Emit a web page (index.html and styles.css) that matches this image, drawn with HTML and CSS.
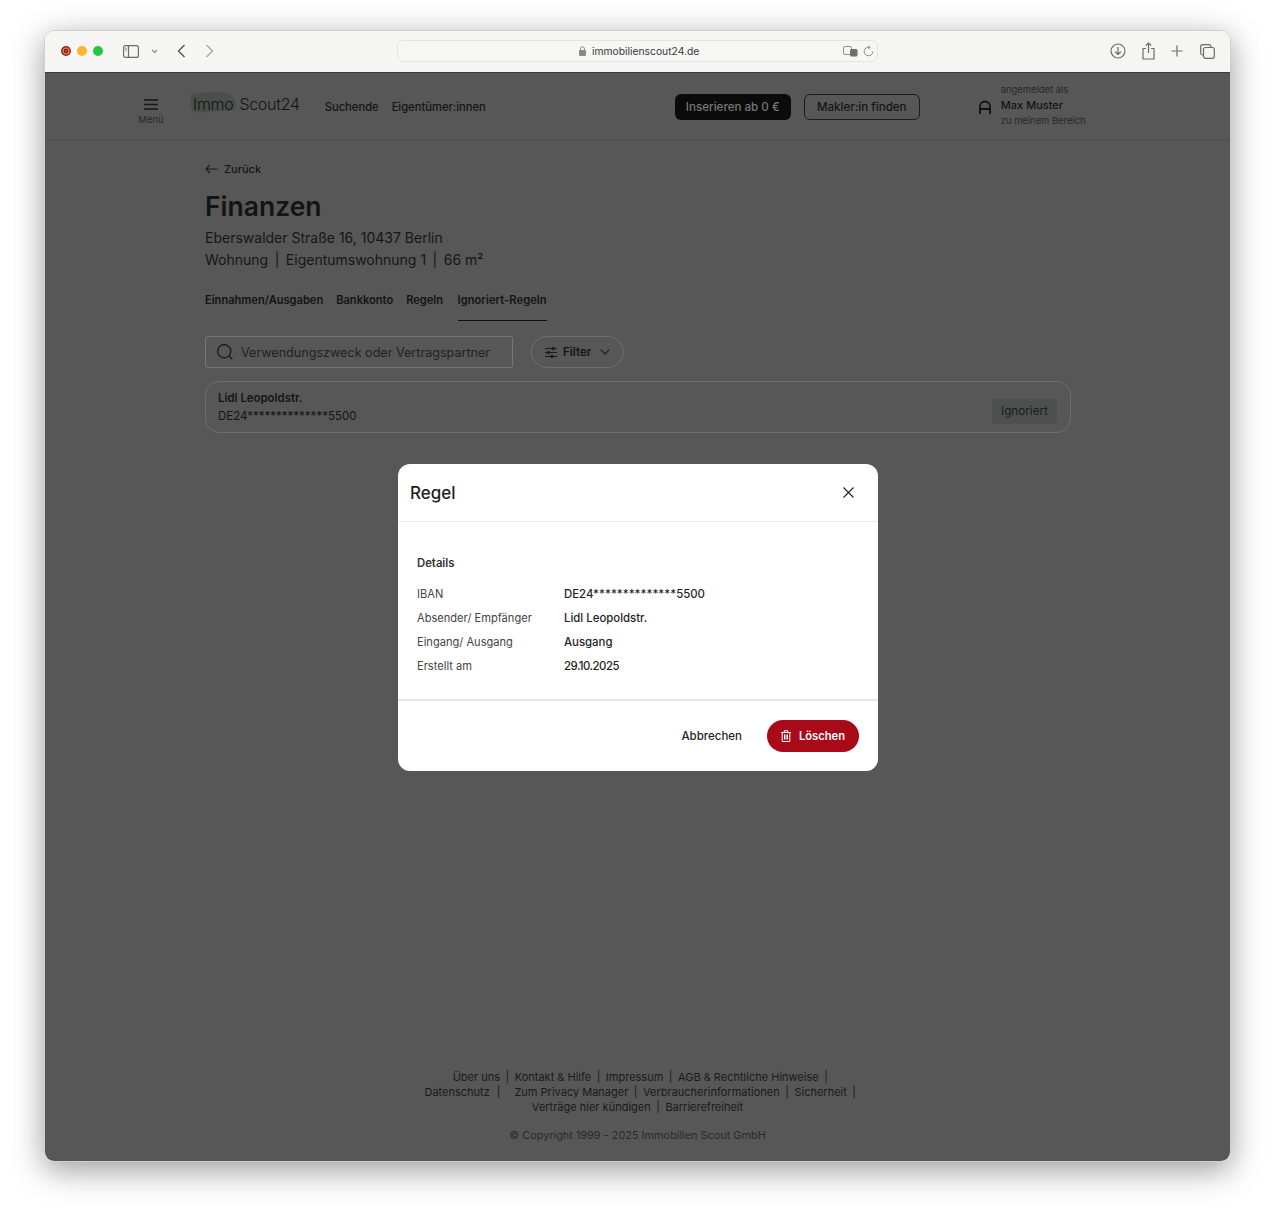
FILE: index.html
```html
<!DOCTYPE html>
<html lang="de">
<head>
  <meta charset="UTF-8" />
  <title>Finanzen - ImmoScout24</title>
  <link rel="stylesheet" href="styles.css">
</head>
<body>
  <div class="window">

    <div class="toolbar">
      <div class="toolbar-left">
        <span class="light light-red">
          <svg width="10" height="10" viewBox="0 0 10 10"><circle cx="5" cy="5" r="5" fill="#8e2230"/><circle cx="5" cy="5" r="3" fill="none" stroke="#e8902a" stroke-width="1.2"/><circle cx="5" cy="5" r="1" fill="#c9402a"/></svg>
        </span>
        <span class="light light-yellow"></span>
        <span class="light light-green"></span>
        <svg class="tb-sidebar" width="16" height="13" viewBox="0 0 16 13" fill="none" stroke="#6f6a6a" stroke-width="1.2"><rect x="0.6" y="0.6" width="14.8" height="11.8" rx="2"/><path d="M5.5 .6v11.8"/><path d="M2.2 3.2h1.6M2.2 5.2h1.6" stroke-width="1"/></svg>
        <svg class="tb-chevron" width="7" height="5" viewBox="0 0 7 5" fill="none" stroke="#8a8a8a" stroke-width="1.2"><path d="M1 1l2.5 2.5L6 1"/></svg>
        <svg class="tb-back" width="9" height="14" viewBox="0 0 9 14" fill="none" stroke="#555" stroke-width="1.4"><path d="M7.5 1L1.5 7l6 6"/></svg>
        <svg class="tb-forward" width="9" height="14" viewBox="0 0 9 14" fill="none" stroke="#a8a8a8" stroke-width="1.4"><path d="M1.5 1l6 6-6 6"/></svg>
      </div>
      <div class="urlbar">
        <svg class="url-lock" width="7" height="10" viewBox="0 0 7 10"><path d="M1.5 4V2.8a2 2 0 0 1 4 0V4" fill="none" stroke="#8a8a8a"/><rect x="0" y="4" width="7" height="6" rx="1" fill="#8a8a8a"/></svg>
        <span class="url-text">immobilienscout24.de</span>
        <svg class="url-translate" width="15" height="11" viewBox="0 0 15 11"><rect x="0.5" y="0.5" width="8" height="8" rx="1.5" fill="none" stroke="#8f8f8f"/><rect x="7" y="3" width="7.5" height="7.5" rx="1.5" fill="#6e6e6e"/></svg>
        <svg class="url-reload" width="11" height="12" viewBox="0 0 11 12" fill="none" stroke="#8a8a8a"><path d="M6.8 2.4A4.3 4.3 0 1 0 9.8 6.5"/><path d="M5.4 .6l1.7 1.8-1.9 1.5"/></svg>
      </div>
      <div class="toolbar-right">
        <svg width="16" height="16" viewBox="0 0 16 16" fill="none" stroke="#6f6a6a" stroke-width="1.2"><circle cx="8" cy="8" r="7"/><path d="M8 4v7.5M5.2 8.8L8 11.5l2.8-2.7"/></svg>
        <svg width="13" height="18" viewBox="0 0 13 18" fill="none" stroke="#6f6a6a" stroke-width="1.2"><path d="M4 6.5H1v10.5h11V6.500H9"/><path d="M6.500 11V1M3.800 3.500L6.500 1l2.700 2.500"/></svg>
        <svg width="12" height="12" viewBox="0 0 12 12" fill="none" stroke="#6f6a6a" stroke-width="1.2"><path d="M6 .5v11M.5 6h11"/></svg>
        <svg class="tb-tabs" width="15" height="15" viewBox="0 0 15 15" fill="none" stroke="#6f6a6a" stroke-width="1.2"><rect x="3.500" y="3.500" width="10.800" height="10.800" rx="2"/><path d="M3 11H2.500a2 2 0 0 1-1.800-2V2.700A2 2 0 0 1 2.700 .7H9a2 2 0 0 1 2 1.800V3"/></svg>
      </div>
    </div>

    <div class="page">
      <header class="site-header">
        <div class="menu-btn">
          <svg width="14" height="11" viewBox="0 0 14 11" stroke="#161616" stroke-width="1.600"><path d="M0 1h14M0 5.500h14M0 10h14"/></svg>
          <span>Menü</span>
        </div>
        <div class="logo">
          <svg class="logo-blob" width="46" height="21" viewBox="0 0 47 24" preserveAspectRatio="none"><path d="M3 2C12 .5 30-.500 38 1c5 1 8 6 8.500 14 .3 5-2 7-6 6.500C30 20.500 18 24 6 23 1 22.500 0 17 .5 10 .7 6 1 2.500 3 2z" fill="#4a4f4c"/></svg>
          <span class="logo-text">Immo</span>
          <span class="logo-text">Scout24</span>
        </div>
        <nav class="site-nav">
          <a>Suchende</a>
          <a>Eigentümer:innen</a>
        </nav>
        <a class="btn-dark">Inserieren ab 0 €</a>
        <a class="btn-outline">Makler:in finden</a>
        <div class="user">
          <svg width="12" height="14" viewBox="0 0 12 14" fill="none" stroke="#111" stroke-width="1.800"><path d="M1 14V6.500a5 5 0 0 1 10 0V14M1 9h10"/></svg>
          <div class="user-text">
            <small>angemeldet als</small>
            <strong>Max Muster</strong>
            <small>zu meinem Bereich</small>
          </div>
        </div>
      </header>

      <main class="content">
        <a class="back-link">
          <svg width="13" height="10" viewBox="0 0 13 10" fill="none" stroke="#1c1c1c" stroke-width="1.100"><path d="M12.500 5H1M5 1L1 5l4 4"/></svg>
          Zurück
        </a>
        <h1>Finanzen</h1>
        <p class="address">Eberswalder Straße 16, 10437 Berlin</p>
        <p class="address">Wohnung<span class="sep">|</span>Eigentumswohnung 1<span class="sep">|</span>66 m²</p>

        <div class="tabs">
          <a class="tab">Einnahmen/Ausgaben</a>
          <a class="tab">Bankkonto</a>
          <a class="tab">Regeln</a>
          <a class="tab tab-active">Ignoriert-Regeln</a>
        </div>

        <div class="filters">
          <div class="search">
            <svg width="16" height="16" viewBox="0 0 17 17" fill="none" stroke="#161616" stroke-width="1.300"><circle cx="7.700" cy="7.700" r="7"/><path d="M12.800 12.800l3.500 3.500"/></svg>
            <span>Verwendungszweck oder Vertragspartner</span>
          </div>
          <div class="filter-btn">
            <svg width="12" height="11" viewBox="0 0 12 11" fill="none" stroke="#1c1c1c"><path d="M0 1.500h12M0 5.500h12M0 9.500h12"/><circle cx="8" cy="1.500" r="1.300" fill="#1c1c1c"/><circle cx="3.500" cy="5.500" r="1.300" fill="#1c1c1c"/><circle cx="7" cy="9.500" r="1.300" fill="#1c1c1c"/></svg>
            <span>Filter</span>
            <svg width="10" height="6" viewBox="0 0 10 6" fill="none" stroke="#1c1c1c" stroke-width="1.100"><path d="M.7 .7L5 5l4.300-4.300"/></svg>
          </div>
        </div>

        <div class="rule-card">
          <div>
            <strong>Lidl Leopoldstr.</strong>
            <span>DE24**************5500</span>
          </div>
          <span class="badge">Ignoriert</span>
        </div>
      </main>

      <footer class="site-footer">
        <div class="foot-line">Über uns<span class="foot-sep">|</span>Kontakt &amp; Hilfe<span class="foot-sep">|</span>Impressum<span class="foot-sep">|</span>AGB &amp; Rechtliche Hinweise<span class="foot-sep">|</span></div>
        <div class="foot-line">Datenschutz<span class="foot-sep foot-sep-wide">|</span>Zum Privacy Manager<span class="foot-sep">|</span>Verbraucherinformationen<span class="foot-sep">|</span>Sicherheit<span class="foot-sep">|</span></div>
        <div>Verträge hier kündigen<span class="foot-sep">|</span>Barrierefreiheit</div>
        <p class="copyright">© Copyright 1999 - 2025 Immobilien Scout GmbH</p>
      </footer>

      <!-- Dialog -->
      <div class="modal">
        <div class="modal-head">
          <h2>Regel</h2>
          <svg width="11" height="11" viewBox="0 0 11 11" stroke="#222" stroke-width="1.100"><path d="M.5 .5l10 10M10.500 .5l-10 10"/></svg>
        </div>
        <div class="modal-body">
          <h3>Details</h3>
          <div class="detail-row"><span>IBAN</span><strong>DE24**************5500</strong></div>
          <div class="detail-row"><span>Absender/ Empfänger</span><strong>Lidl Leopoldstr.</strong></div>
          <div class="detail-row"><span>Eingang/ Ausgang</span><strong>Ausgang</strong></div>
          <div class="detail-row"><span>Erstellt am</span><strong class="date">29.10.2025</strong></div>
        </div>
        <div class="modal-foot">
          <a class="btn-cancel">Abbrechen</a>
          <a class="btn-delete">
            <svg width="10" height="12" viewBox="0 0 10 12" fill="none" stroke="#fff"><path d="M0 2.500h10M3.300 2.500V.7h3.400v1.800M1.200 2.500v9h7.600v-9M3.500 4.500v5M5 4.500v5M6.500 4.500v5"/></svg>
            Löschen
          </a>
        </div>
      </div>
    </div>
  </div>
</body>
</html>
```

FILE: styles.css
```css
:root {
  --page: #575757;
  --text: #141414;
  --muted: #282828;
  --line: #6e6e6e;
  --red: #a90a1a;
}

* {
  box-sizing: border-box;
  margin: 0;
  padding: 0;
}

body {
  font-family: 'Inter', 'Liberation Sans', sans-serif;
  background: #fff;
  padding: 30px 44px 59px;
  color: var(--text);
}

.window {
  width: 1187px;
  height: 1132px;
  border: 1px solid #cfcfcf;
  border-radius: 10px;
  overflow: clip;
  display: flex;
  flex-direction: column;
  box-shadow: 0 8px 32px rgba(0, 0, 0, 0.4);
}

/* Browserleiste */
.toolbar {
  height: 42px;
  padding-bottom: 1px;
  flex-shrink: 0;
  background: #f5f5f3;
  border-bottom: 1px solid #3c3c3c;
  display: grid;
  grid-template-columns: 352px 481px 1fr;
  align-items: center;
}

.toolbar-left {
  display: flex;
  align-items: center;
  padding-left: 16px;
}

.light {
  width: 10px;
  height: 10px;
  border-radius: 50%;
  margin-right: 6px;
  display: block;
}

.light svg {
  display: block;
}

.light-yellow {
  background: #fbb72e;
}

.light-green {
  background: #24c840;
}

.tb-sidebar {
  margin-left: 14px;
}

.tb-chevron {
  margin-left: 12px;
}

.tb-back {
  margin-left: 19px;
}

.tb-forward {
  margin-left: 19px;
}

.urlbar {
  height: 22px;
  background: #f6f6f4;
  border: 1px solid #e4e4e2;
  border-radius: 6px;
  display: flex;
  align-items: center;
  padding-left: 181px;
  font-size: 10.300px;
  color: #3a3a3a;
}

.url-lock {
  margin-right: 6px;
}

.url-text {
  width: 251px;
}

.url-reload {
  margin-left: 5px;
}

.toolbar-right {
  display: flex;
  align-items: center;
  gap: 16px;
  padding-left: 232px;
}

.tb-tabs {
  margin-left: 1px;
}

/* Seite */
.page {
  position: relative;
  flex: 1;
  background: var(--page);
  display: flex;
  flex-direction: column;
}

.site-header {
  height: 67px;
  flex-shrink: 0;
  border-bottom: 1px solid #4e4e4e;
  display: flex;
  align-items: center;
  padding: 1px 0 0 93px;
  font-size: 11.200px;
}

.menu-btn {
  width: 26px;
  display: flex;
  flex-direction: column;
  align-items: center;
  gap: 4px;
  font-size: 9.500px;
  color: var(--muted);
  margin-top: 10px;
}

.logo {
  position: relative;
  display: flex;
  gap: 6px;
  margin-left: 29px;
  margin-top: -6px;
  font-size: 16px;
  font-weight: 300;
  letter-spacing: -0.3px;
}

.logo-blob {
  position: absolute;
  left: -3px;
  top: -2px;
}

.logo-text {
  position: relative;
}

.site-nav {
  display: flex;
  gap: 13px;
  margin-left: 25px;
  font-weight: 500;
}

.btn-dark,
.btn-outline {
  height: 26px;
  width: 116px;
  border-radius: 6px;
  display: flex;
  align-items: center;
  justify-content: center;
  font-size: 11.600px;
  font-weight: 500;
}

.btn-dark {
  margin-left: 189px;
  background: #0b0b0b;
  color: #777;
}

.btn-outline {
  margin-left: 13px;
  border: 1px solid #1c1c1c;
}

.user {
  display: flex;
  align-items: center;
  gap: 10px;
  margin-left: 59px;
}

.user-text {
  display: flex;
  flex-direction: column;
  gap: 3px;
  margin-top: -4px;
}

.user-text small {
  font-size: 9.400px;
  color: var(--muted);
}

.user-text strong {
  font-size: 11px;
  font-weight: 500;
}

.content {
  flex: 1;
  padding: 22px 0 0 160px;
  width: 1026px;
}

.back-link {
  display: flex;
  align-items: center;
  gap: 6px;
  font-size: 11px;
  font-weight: 500;
  height: 14px;
}

h1 {
  font-size: 26.500px;
  font-weight: 600;
  line-height: 34px;
  margin-top: 13px;
  margin-bottom: 4px;
}

.address {
  font-size: 14px;
  line-height: 22px;
  color: #161616;
}

.sep {
  margin: 0 6.500px;
}

.tabs {
  display: flex;
  gap: 13px;
  margin-top: 17px;
  font-size: 11.100px;
  font-weight: 600;
}

.tab {
  height: 33px;
  padding-top: 5px;
}

.tab-active {
  margin-left: 1.500px;
  letter-spacing: 0.08px;
  border-bottom: 1.500px solid #111;
}

.filters {
  display: flex;
  gap: 18px;
  margin-top: 15px;
}

.search {
  width: 308px;
  height: 32px;
  border: 1px solid #777;
  border-radius: 3px;
  display: flex;
  align-items: center;
  gap: 8px;
  padding-left: 11px;
  font-size: 12.600px;
  color: #222;
  white-space: nowrap;
}

.filter-btn {
  width: 93px;
  height: 32px;
  border: 1px solid #6e6e6e;
  border-radius: 16px;
  display: flex;
  align-items: center;
  gap: 6px;
  padding-left: 13px;
  font-size: 11.500px;
  font-weight: 600;
}

.filter-btn span {
  margin-right: 3px;
}

.rule-card {
  margin-top: 13px;
  height: 52px;
  border: 1px solid #6e6e6e;
  border-radius: 14px;
  display: flex;
  align-items: center;
  justify-content: space-between;
  padding: 0 13px 0 12px;
  font-size: 11.300px;
}

.rule-card strong,
.rule-card > div > span {
  display: block;
  line-height: 18px;
}

.rule-card strong {
  font-weight: 600;
  font-size: 11.400px;
}

.rule-card > div > span {
  font-size: 11.500px;
}

.badge {
  margin-top: 8px;
  width: 65px;
  height: 25px;
  background: #4d504e;
  border-radius: 2px;
  display: flex;
  align-items: center;
  justify-content: center;
  font-size: 11.700px;
  color: #1c1c1c;
}

.site-footer {
  height: 91px;
  text-align: center;
  font-size: 11px;
  line-height: 15px;
  color: #1a1a1a;
  flex-shrink: 0;
}

.foot-line {
  padding-left: 11px;
}

.foot-sep {
  margin: 0 5.500px;
}

.foot-sep-wide {
  margin: 0 14px 0 7px;
}

.copyright {
  margin-top: 13px;
  font-size: 10.900px;
  color: #2a2a2a;
}

/* Dialog */
.modal {
  position: absolute;
  left: 353px;
  top: 391px;
  width: 480px;
  height: 307px;
  background: #fff;
  border-radius: 12px;
  display: flex;
  flex-direction: column;
  color: #1f1f1f;
}

.modal-head {
  height: 58px;
  border-bottom: 1px solid #ececec;
  display: flex;
  align-items: center;
  justify-content: space-between;
  padding: 0 24px 0 12px;
  flex-shrink: 0;
}

.modal-head h2 {
  font-size: 17px;
  font-weight: 500;
}

.modal-body {
  flex: 1;
  padding: 33px 19px 0;
  font-size: 11.100px;
}

.modal-body h3 {
  font-size: 11.300px;
  font-weight: 600;
  line-height: 16px;
  margin-bottom: 10.500px;
  color: #333;
}

.detail-row {
  display: grid;
  grid-template-columns: 147px 1fr;
  height: 24px;
  align-items: center;
  color: #444;
}

.detail-row strong {
  font-size: 11.400px;
  font-weight: 500;
  color: #1f1f1f;
}

.detail-row .date {
  letter-spacing: -0.5px;
}

.modal-foot {
  height: 72px;
  border-top: 2px solid #e8e8e8;
  display: flex;
  align-items: center;
  justify-content: flex-end;
  padding-right: 19px;
  flex-shrink: 0;
}

.btn-cancel {
  font-size: 11.500px;
  font-weight: 500;
  margin-right: 25px;
}

.btn-delete {
  width: 92px;
  height: 32px;
  border-radius: 16px;
  background: var(--red);
  color: #fff;
  display: flex;
  align-items: center;
  justify-content: center;
  gap: 8px;
  font-size: 11.200px;
  font-weight: 600;
}
```
